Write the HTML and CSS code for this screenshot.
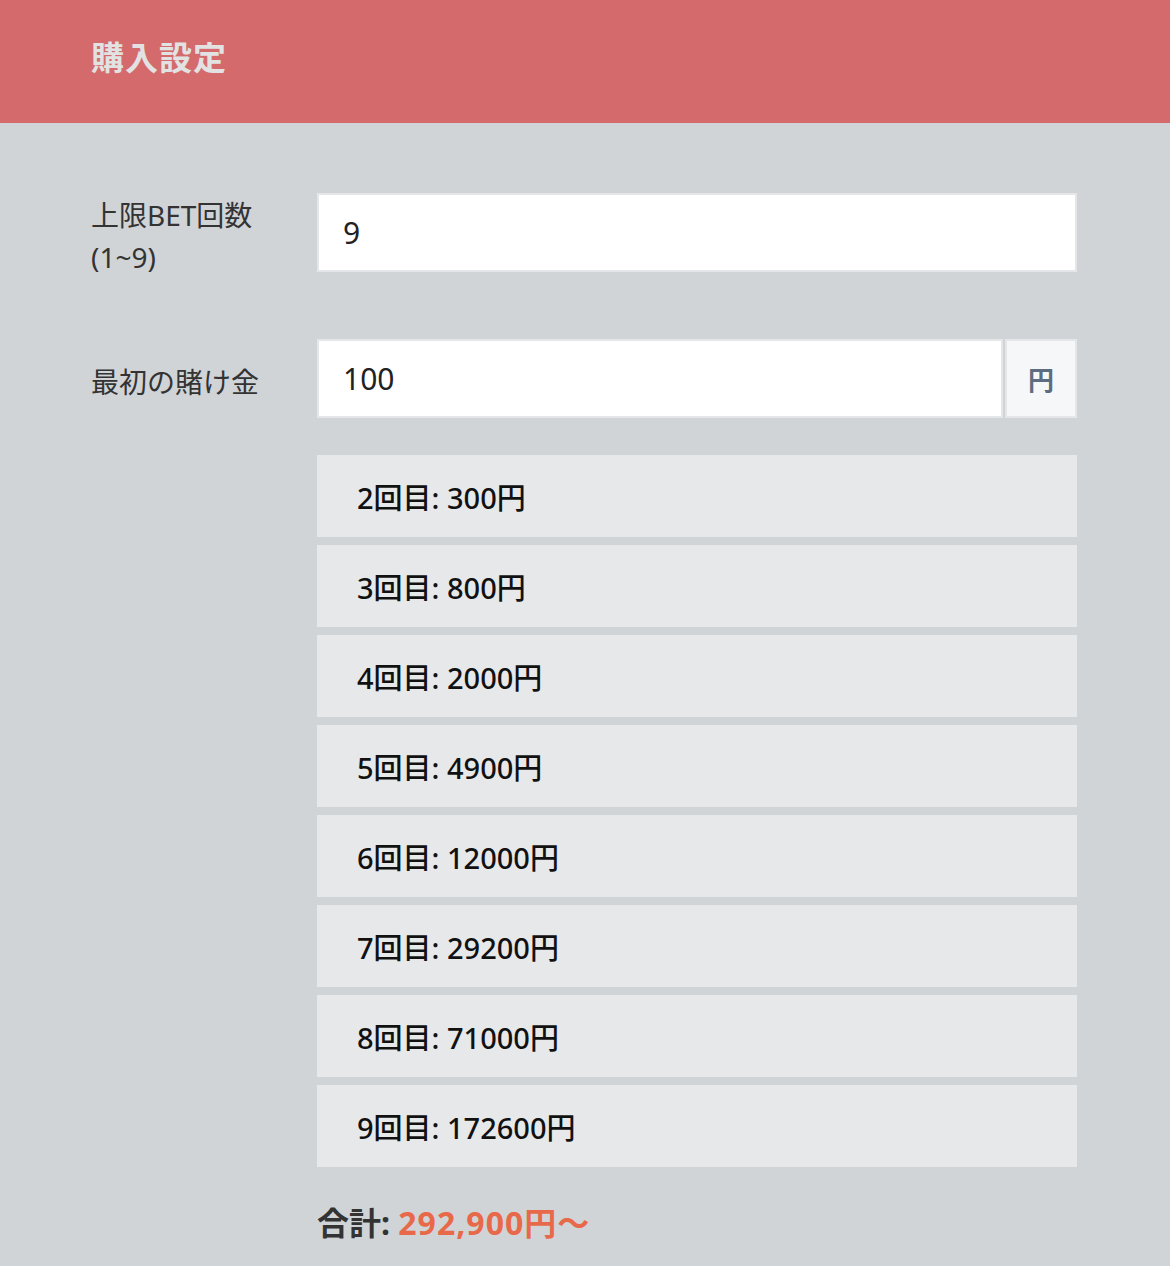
FILE: index.html
```html
<!doctype html>
<html>
<head>
<meta charset="utf-8">
<title>購入設定</title>
<link rel="stylesheet" href="styles.css">
</head>
<body>
<div class="head">
    <h1>購入設定</h1>
</div>
<div class="main">
    <div class="row">
        <label class="label">上限BET回数<br>(1~9)</label>
        <div class="field">
            <input class="inp" type="text" value="9">
        </div>
    </div>
    <div class="row">
        <label class="label">最初の賭け金</label>
        <div class="field">
            <input class="inp" type="text" value="100">
            <span class="unit">円</span>
        </div>
    </div>
    <div class="row">
        <div class="label"></div>
        <ul class="list">
            <li>2回目: 300円</li>
            <li>3回目: 800円</li>
            <li>4回目: 2000円</li>
            <li>5回目: 4900円</li>
            <li>6回目: 12000円</li>
            <li>7回目: 29200円</li>
            <li>8回目: 71000円</li>
            <li>9回目: 172600円</li>
        </ul>
    </div>
    <div class="row">
        <div class="label"></div>
        <p class="total">合計: <span>292,900円〜</span></p>
    </div>
</div>
</body>
</html>
```
FILE: styles.css
```css
* { padding: 0; margin: 0; box-sizing: border-box; }
li { list-style: none; }
body { background: #d1d4d7; font-family: "Noto Sans", "Noto Sans CJK JP", sans-serif; color: #333; }

.head { height: 123px; background: #d46a6c; padding: 0 91px 12px; display: flex; align-items: center; }
.head h1 { font-size: 33px; font-weight: bold; color: #e2e2e2; letter-spacing: 1px; }

.main { padding: 70px 93px 0 91px; }
.row { display: flex; align-items: center; margin-bottom: 67px; }
.row:nth-child(2) { margin-bottom: 37px; }
.row:nth-child(3) { margin-bottom: 31px; }
.row:last-child { margin-bottom: 0; }
.label { width: 226px; height: 79px; flex: none; display: flex; align-items: center; padding-top: 6px; font-size: 28px; line-height: 42px; color: #333; }
.row:nth-child(3) .label, .row:nth-child(4) .label { height: auto; }

.field { flex: 1; display: flex; height: 79px; }
.inp { flex: 1; min-width: 0; height: 79px; border: 2px solid #e4e6e9; background: #fff; padding: 0 24px; font: 30px "Noto Sans", "Noto Sans CJK JP", sans-serif; color: #222; outline: none; }
.unit { width: 72px; flex: none; margin-left: 2px; background: #f6f7f9; border: 2px solid #e4e6e9; display: flex; align-items: center; justify-content: center; font-size: 26px; font-weight: bold; color: #5d6c80; }

.list { flex: 1; }
.list li { height: 82px; margin-bottom: 8px; background: #e7e8ea; padding: 0 40px; display: flex; align-items: center; font-size: 29px; font-weight: 500; color: #111; }
.list li:last-child { margin-bottom: 0; }

.total { font-size: 32px; font-weight: bold; color: #333; }
.total span { color: #e8694a; letter-spacing: 1px; }
```
